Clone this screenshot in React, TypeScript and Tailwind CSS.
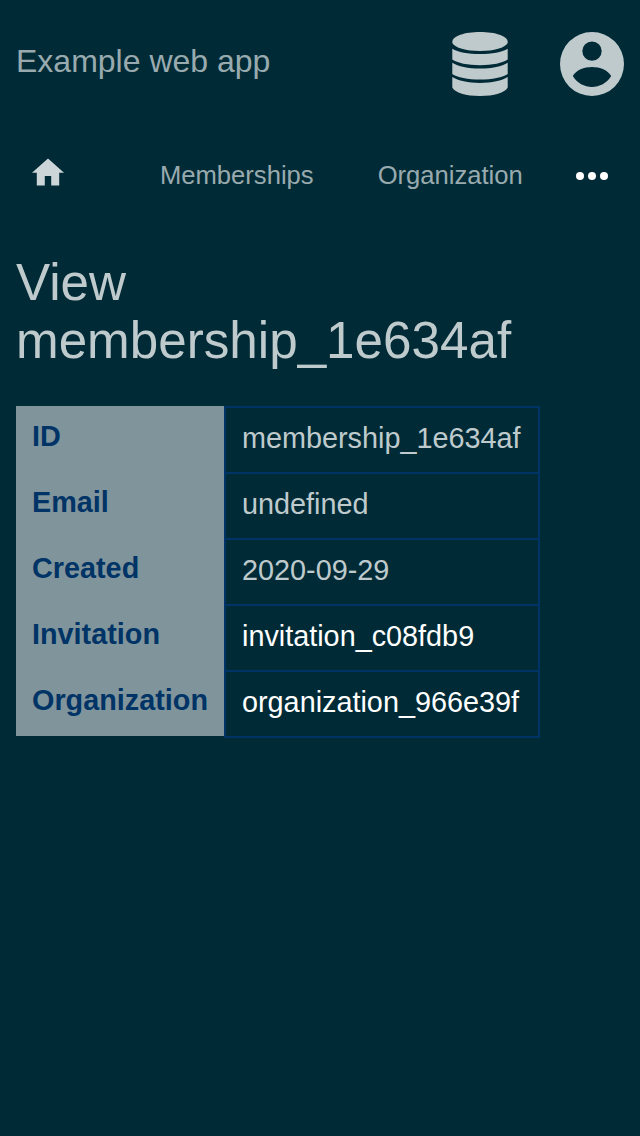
const rows = [
  { label: "ID", value: "membership_1e634af" },
  { label: "Email", value: "undefined" },
  { label: "Created", value: "2020-09-29" },
  { label: "Invitation", value: "invitation_c08fdb9", link: true },
  { label: "Organization", value: "organization_966e39f", link: true },
];

function DatabaseIcon() {
  return (
    <svg className="h-16 w-16" viewBox="0 0 64 64" fill="currentColor">
      <path d="M4.3 10C4.3 4 16.5 0 32 0S59.7 4 59.7 10V11C57 15.8 46 19 32 19S7 15.8 4.3 11Z" />
      <path d="M4.3 16.7C10 20 20 22 32 22S54 20 59.7 16.7V27.5C55 31 44 33.2 32 33.2S9 31 4.3 27.5Z" />
      <path d="M4.3 30.7C10 34.5 20 36.6 32 36.6S54 34.5 59.7 30.7V42C55 45.4 44 47.6 32 47.6S9 45.4 4.3 42Z" />
      <path d="M4.3 45.1C10 48.8 20 50.9 32 50.9S54 48.8 59.7 45.1V55.5C57 60.8 46 64 32 64S7 60.8 4.3 55.5Z" />
    </svg>
  );
}

function AccountIcon() {
  return (
    <svg className="h-16 w-16" viewBox="0 0 64 64" fill="currentColor" fillRule="evenodd">
      <path d="M32 0a32 32 0 1 0 0 64a32 32 0 0 0 0-64ZM32 9.4a9.7 9.7 0 1 1 0 19.4a9.7 9.7 0 0 1 0-19.4ZM32 55C24.5 55 17 51 12.8 44C16 38 24 34.9 32 34.9S48 38 51.2 44C47 51 39.5 55 32 55Z" />
    </svg>
  );
}

function HomeIcon() {
  return (
    <svg className="block h-8 w-8" viewBox="0 0 32 32" fill="currentColor">
      <path d="M12.8 29.6V20H19.2V29.6H27.2V16.8H32L16 2.4L0 16.8H4.8V29.6Z" />
    </svg>
  );
}

export default function App() {
  return (
    <div className="h-[1136px] w-[640px] overflow-hidden bg-[#002b36] font-['Liberation_Sans',sans-serif] text-[#bfcacd]">
      <header className="flex h-32 items-center justify-between px-4">
        <a className="-mt-[7px] text-[32px] text-[#99aaaf]">Example web app</a>
        <div className="flex gap-12">
          <DatabaseIcon />
          <AccountIcon />
        </div>
      </header>
      <nav className="flex h-24 items-center px-8 text-[25.6px] text-[#99aaaf]">
        <a className="-mt-2 text-[#ccd5d7]"><HomeIcon /></a>
        <a className="-mt-0.5 ml-24">Memberships</a>
        <a className="-mt-0.5 ml-16">Organization</a>
        <svg className="ml-auto h-8 w-8 text-white" viewBox="0 0 32 32" fill="currentColor">
          <circle cx="4" cy="16" r="4" />
          <circle cx="16" cy="16" r="4" />
          <circle cx="28" cy="16" r="4" />
        </svg>
      </nav>
      <h1 className="ml-4 mt-[30px] text-[51.2px] leading-[58px]">View<br />membership_1e634af</h1>
      <dl className="ml-4 mt-9 grid w-[524px] grid-cols-[208px_316px] text-[28.8px]">
        {rows.map((r) => (
          <div key={r.label} className="contents">
            <dt className="h-[66px] bg-[#80959b] pl-4 pt-[14px] leading-[33px] font-bold text-[#003366]">{r.label}</dt>
            <dd className={`-mb-0.5 border-2 border-[#003366] pl-4 pt-[14px] leading-[33px] ${r.link ? "text-white" : ""}`}>{r.value}</dd>
          </div>
        ))}
      </dl>
    </div>
  );
}
